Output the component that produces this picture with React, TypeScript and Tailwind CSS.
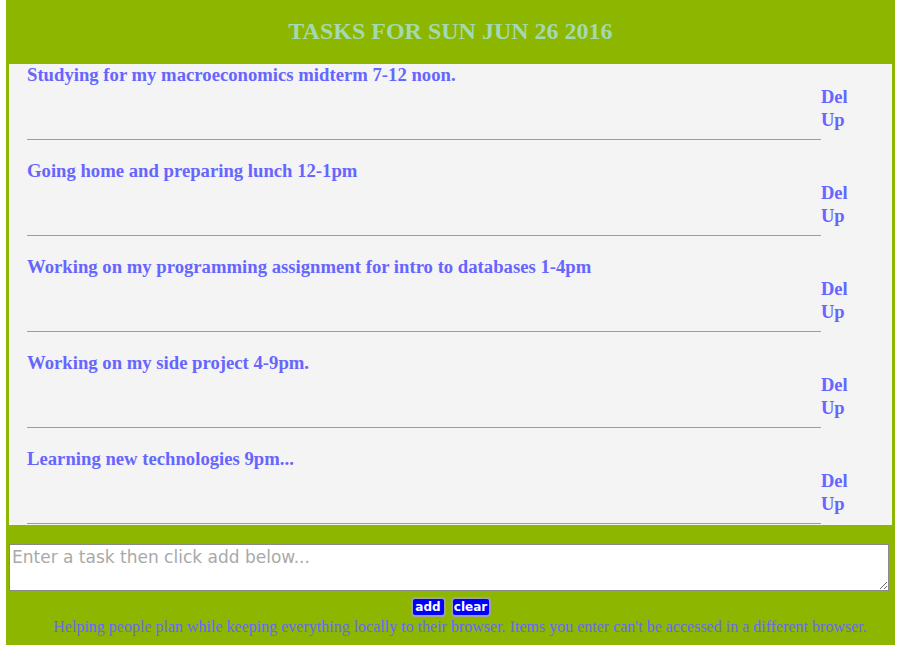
const tasks = [
  "Studying for my macroeconomics midterm 7-12 noon.",
  "Going home and preparing lunch 12-1pm",
  "Working on my programming assignment for intro to databases 1-4pm",
  "Working on my side project 4-9pm.",
  "Learning new technologies 9pm...",
];

const serif = "font-['Liberation_Serif','Times_New_Roman',serif]";

function TaskItem({ text }: { text: string }) {
  return (
    <li className="pl-[18px] mb-[20px]">
      <div className="h-[22px] text-[18.7px] leading-[22px] font-bold text-[#6666ff]">{text}</div>
      <div className="flex items-start">
        <div className="flex-1 pt-[53px]">
          <div className="border-t border-[#9c9c9c]" />
        </div>
        <div className="w-[71px] text-[18.5px] font-bold leading-[23px] text-[#6666ff]">
          <a className="block cursor-pointer">Del</a>
          <a className="block cursor-pointer">Up</a>
        </div>
      </div>
    </li>
  );
}

export default function App() {
  return (
    <div className={`min-h-screen bg-white pl-[6px] pr-[3px] ${serif}`}>
      <div className="h-[645px] bg-[#8db600] px-[3px]">
        <h1 className="h-[64px] text-center text-[24px] font-bold leading-[62px] text-[#a3d9b1]">
          TASKS FOR SUN JUN 26 2016
        </h1>
        <ul className="h-[461px] overflow-hidden bg-[#f4f4f4]">
          {tasks.map((t) => (
            <TaskItem key={t} text={t} />
          ))}
        </ul>
        <div className="pt-[19px]">
          <textarea
            className="block h-[47px] w-[880px] resize-y border border-[#8a8a8a] bg-white px-[2px] py-[2px] font-['DejaVu_Sans','Verdana',sans-serif] text-[17px] leading-[21px] text-black placeholder:text-[#a9a9a9] outline-none"
            placeholder="Enter a task then click add below..."
          />
        </div>
        <div className="flex justify-center gap-[5px] pt-[6px]">
          <button className="h-[20px] w-[35px] rounded-[4px] border-2 border-[#a0a0a0] bg-[#0000ff] font-['DejaVu_Sans',sans-serif] text-[12px] font-bold leading-[16px] text-white">
            add
          </button>
          <button className="h-[20px] w-[40px] rounded-[4px] border-2 border-[#a0a0a0] bg-[#0000ff] font-['DejaVu_Sans',sans-serif] text-[12px] font-bold leading-[16px] text-white">
            clear
          </button>
        </div>
        <p className="pl-[19px] text-center text-[16px] leading-[20px] text-[#6666ff]">
          Helping people plan while keeping everything locally to their browser. Items you enter can't be accessed in a different browser.
        </p>
      </div>
    </div>
  );
}
